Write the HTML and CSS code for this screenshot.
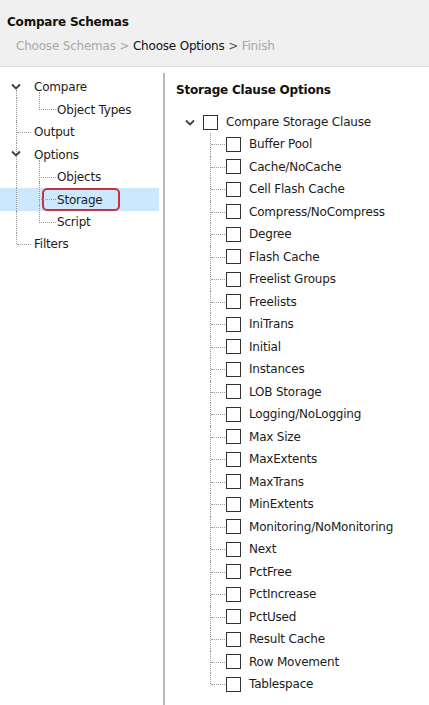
FILE: index.html
```html
<!DOCTYPE html>
<html>
<head>
<meta charset="utf-8">
<link rel="stylesheet" href="styles.css">
</head>
<body>
<div class="window">
  <header class="header">
    <div class="title">Compare Schemas</div>
    <div class="crumbs"><span class="dim">Choose Schemas &gt;</span> <span class="cur">Choose Options</span> <span class="sep">&gt;</span> <span class="dim">Finish</span></div>
  </header>
  <div class="main">
    <nav class="nav">
      <ul class="ntree">
        <li class="nrow top expander"><span class="chev"><svg width="10" height="7" viewBox="0 0 10 7"><path d="M1 1.5 L5 5.5 L9 1.5" fill="none" stroke="#404040" stroke-width="1.8"/></svg></span><span class="lbl">Compare</span></li>
        <li class="nrow child last"><span class="lbl">Object Types</span></li>
        <li class="nrow top leaf"><span class="lbl">Output</span></li>
        <li class="nrow top expander"><span class="chev"><svg width="10" height="7" viewBox="0 0 10 7"><path d="M1 1.5 L5 5.5 L9 1.5" fill="none" stroke="#404040" stroke-width="1.8"/></svg></span><span class="lbl">Options</span></li>
        <li class="nrow child"><span class="lbl">Objects</span></li>
        <li class="nrow child selected"><span class="lbl boxed">Storage</span></li>
        <li class="nrow child last"><span class="lbl">Script</span></li>
        <li class="nrow top leaf lasttop"><span class="lbl">Filters</span></li>
      </ul>
    </nav>
    <section class="content">
      <h2 class="heading">Storage Clause Options</h2>
      <div class="root">
        <span class="chev"><svg width="10" height="7" viewBox="0 0 10 7"><path d="M1 1.5 L5 5.5 L9 1.5" fill="none" stroke="#404040" stroke-width="1.8"/></svg></span><span class="cb"></span><span class="lbl">Compare Storage Clause</span>
      </div>
      <ul class="items">
        <li class="item"><span class="cb"></span><span class="lbl">Buffer Pool</span></li>
        <li class="item"><span class="cb"></span><span class="lbl">Cache/NoCache</span></li>
        <li class="item"><span class="cb"></span><span class="lbl">Cell Flash Cache</span></li>
        <li class="item"><span class="cb"></span><span class="lbl">Compress/NoCompress</span></li>
        <li class="item"><span class="cb"></span><span class="lbl">Degree</span></li>
        <li class="item"><span class="cb"></span><span class="lbl">Flash Cache</span></li>
        <li class="item"><span class="cb"></span><span class="lbl">Freelist Groups</span></li>
        <li class="item"><span class="cb"></span><span class="lbl">Freelists</span></li>
        <li class="item"><span class="cb"></span><span class="lbl">IniTrans</span></li>
        <li class="item"><span class="cb"></span><span class="lbl">Initial</span></li>
        <li class="item"><span class="cb"></span><span class="lbl">Instances</span></li>
        <li class="item"><span class="cb"></span><span class="lbl">LOB Storage</span></li>
        <li class="item"><span class="cb"></span><span class="lbl">Logging/NoLogging</span></li>
        <li class="item"><span class="cb"></span><span class="lbl">Max Size</span></li>
        <li class="item"><span class="cb"></span><span class="lbl">MaxExtents</span></li>
        <li class="item"><span class="cb"></span><span class="lbl">MaxTrans</span></li>
        <li class="item"><span class="cb"></span><span class="lbl">MinExtents</span></li>
        <li class="item"><span class="cb"></span><span class="lbl">Monitoring/NoMonitoring</span></li>
        <li class="item"><span class="cb"></span><span class="lbl">Next</span></li>
        <li class="item"><span class="cb"></span><span class="lbl">PctFree</span></li>
        <li class="item"><span class="cb"></span><span class="lbl">PctIncrease</span></li>
        <li class="item"><span class="cb"></span><span class="lbl">PctUsed</span></li>
        <li class="item"><span class="cb"></span><span class="lbl">Result Cache</span></li>
        <li class="item"><span class="cb"></span><span class="lbl">Row Movement</span></li>
        <li class="item last"><span class="cb"></span><span class="lbl">Tablespace</span></li>
      </ul>
    </section>
  </div>
</div>
</body>
</html>
```
FILE: styles.css
```css
* { box-sizing: border-box; }
html, body { margin: 0; padding: 0; background: #ffffff; }
body {
  font-family: "DejaVu Sans", Verdana, sans-serif;
  font-size: 12px;
  color: #1c1c1c;
  width: 429px;
  height: 705px;
  overflow: hidden;
}
.window { display: flex; flex-direction: column; height: 705px; }
.header {
  height: 67px;
  background: #f0f0f0;
  border-bottom: 1px solid #dadada;
  padding: 15px 0 0 7px;
  flex: none;
}
.title { font-weight: bold; font-size: 12px; color: #111; letter-spacing: -0.2px; }
.crumbs { margin-top: 10px; padding-left: 9px; font-size: 12px; letter-spacing: -0.2px; }
.dim { color: #a8a8a8; }
.cur { color: #111; }
.sep { color: #555; }
.main { display: flex; flex: 1; min-height: 0; }
.nav {
  width: 165px;
  flex: none;
  border-right: 2px solid #b9b9b9;
  margin-top: 6px;
  padding-top: 3px;
}
ul { list-style: none; margin: 0; padding: 0; }
.nrow {
  position: relative;
  height: 22.45px;
  display: flex;
  align-items: center;
  letter-spacing: -0.2px;
}
.nrow.top .lbl { margin-left: 34px; }
.nrow.child .lbl { margin-left: 57px; }
.nrow .chev { position: absolute; left: 11px; top: 7px; line-height: 0; }
.nrow.selected { background: #cce8ff; margin-right: 4px; }
.lbl.boxed {
  border: 2px solid #c8303c;
  border-radius: 5px;
  padding: 2px 15px 1px 13px;
  margin-left: 42px !important;
  line-height: 16px;
}
.nrow.top::before, .nrow.child::before {
  content: "";
  position: absolute;
  left: 16px;
  top: 0;
  bottom: 0;
  border-left: 1px dotted #9a9a9a;
}
.nrow.top:first-child::before { top: 14px; }
.nrow.lasttop::before { bottom: 50%; }
.nrow.leaf::after {
  content: "";
  position: absolute;
  left: 17px;
  width: 14px;
  top: 50%;
  border-top: 1px dotted #9a9a9a;
}
.nrow.child::after {
  content: "";
  position: absolute;
  left: 39px;
  top: -6px;
  height: 17px;
  width: 16px;
  border-left: 1px dotted #9a9a9a;
  border-bottom: 1px dotted #9a9a9a;
}
.nrow.child:not(.last) .lbl::before {
  content: "";
  position: absolute;
  left: 39px;
  top: 11px;
  bottom: 0;
  border-left: 1px dotted #9a9a9a;
}
.content { flex: 1; padding: 15px 0 0 11px; }
.heading { margin: 0 0 12px 0; font-size: 12px; font-weight: bold; color: #111; height: 17px; line-height: 17px; letter-spacing: -0.2px; }
.root {
  position: relative;
  height: 22px;
  display: flex;
  align-items: center;
  padding-left: 27px;
  letter-spacing: -0.2px;
}
.root .chev { position: absolute; left: 9px; top: 8px; line-height: 0; }
.cb {
  width: 15px;
  height: 15px;
  border: 1px solid #333;
  background: #fff;
  flex: none;
  margin-right: 8px;
}
.item {
  position: relative;
  height: 22.5px;
  display: flex;
  align-items: center;
  padding-left: 50px;
  letter-spacing: -0.2px;
}
.item::before {
  content: "";
  position: absolute;
  left: 34px;
  top: 0;
  bottom: 0;
  border-left: 1px dotted #9a9a9a;
}
.item.last::before { bottom: 50%; }
.item::after {
  content: "";
  position: absolute;
  left: 35px;
  width: 14px;
  top: 50%;
  border-top: 1px dotted #9a9a9a;
}
```
